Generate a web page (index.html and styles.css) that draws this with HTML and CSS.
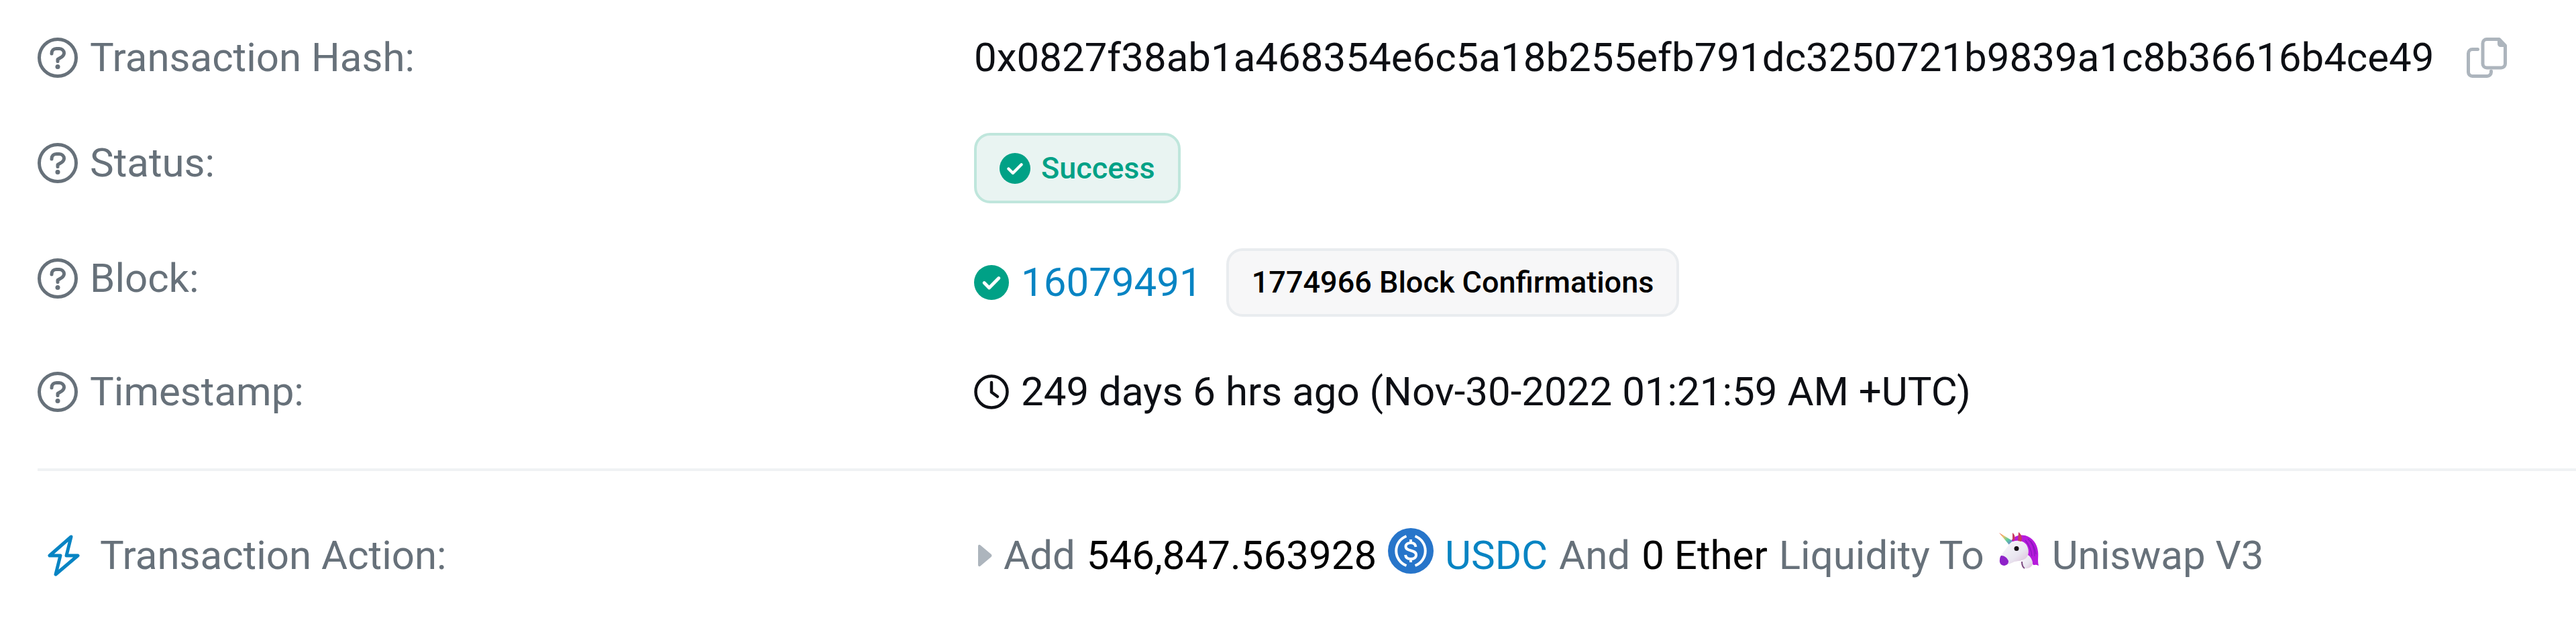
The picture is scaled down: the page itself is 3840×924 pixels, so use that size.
FILE: index.html
```html
<!DOCTYPE html>
<html lang="en">
<head>
    <meta charset="UTF-8">
    <meta name="viewport" content="width=device-width, initial-scale=1.0">
    <title>Transaction Details</title>
    <link rel="stylesheet" href="styles.css">
</head>
<body>
    <!-- shared icons -->
    <svg class="sprite" aria-hidden="true">
        <symbol id="icon-help" viewBox="0 0 60 60">
            <circle cx="30" cy="30" r="27.500" fill="none" stroke="currentColor" stroke-width="5"/>
            <path d="M21 24c0-5 3-7.500 7-7.500h4.500c4 0 7 3 7 6.500 0 3-1.500 4.500-3.500 5.800l-6 3.700v3" fill="none" stroke="currentColor" stroke-width="5" stroke-linecap="round" stroke-linejoin="round"/>
            <circle cx="30" cy="43.500" r="3.500" fill="currentColor"/>
        </symbol>
        <symbol id="icon-check" viewBox="0 0 48 48">
            <circle cx="24" cy="24" r="24" fill="#00a186"/>
            <path d="M14 24.500l6.800 6.800L34 18" fill="none" stroke="#fff" stroke-width="4.500" stroke-linecap="round" stroke-linejoin="round"/>
        </symbol>
    </svg>

    <main class="details">
        <div class="row">
            <div class="label"><svg class="help"><use href="#icon-help"/></svg>Transaction Hash:</div>
            <div class="value">
                <span>0x0827f38ab1a468354e6c5a18b255efb791dc3250721b9839a1c8b36616b4ce49</span>
                <button type="button" class="copy" aria-label="Copy transaction hash">
                    <svg viewBox="0 0 60 60" fill="none" stroke="#adb5bd" stroke-width="5" stroke-linecap="round" stroke-linejoin="round">
                        <path d="M30 2.500h18.500l9 9.500v27a6 6 0 0 1-6 6H30a6 6 0 0 1-6-6V8.500a6 6 0 0 1 6-6z"/>
                        <path d="M47.500 3v6.500a3 3 0 0 0 3 3h6.500z" fill="#adb5bd" stroke-width="3"/>
                        <path d="M16.500 17.500H8.500a6 6 0 0 0-6 6v28a6 6 0 0 0 6 6h22a6 6 0 0 0 6-6v-1.500"/>
                    </svg>
                </button>
            </div>
        </div>

        <div class="row">
            <div class="label"><svg class="help"><use href="#icon-help"/></svg>Status:</div>
            <div class="value">
                <span class="badge badge-success"><svg class="check-sm"><use href="#icon-check"/></svg>Success</span>
            </div>
        </div>

        <div class="row">
            <div class="label"><svg class="help"><use href="#icon-help"/></svg>Block:</div>
            <div class="value">
                <svg class="check"><use href="#icon-check"/></svg>
                <a href="#">16079491</a>
                <span class="badge badge-confirm">1774966 Block Confirmations</span>
            </div>
        </div>

        <div class="row">
            <div class="label"><svg class="help"><use href="#icon-help"/></svg>Timestamp:</div>
            <div class="value">
                <svg class="clock" viewBox="0 0 52 52" fill="none" stroke="#0d0f14" stroke-width="4.500" stroke-linecap="round" stroke-linejoin="round">
                    <circle cx="26" cy="26" r="23.500"/>
                    <path d="M26 12v14.500l9 6.500"/>
                </svg>
                <span>249 days 6 hrs ago (Nov-30-2022 01:21:59 AM +UTC)</span>
            </div>
        </div>

        <hr>

        <div class="row">
            <div class="label">
                <svg class="bolt" viewBox="0 0 48 62" fill="none" stroke="#0784c3" stroke-width="5" stroke-linejoin="round">
                    <path d="M35 3L3 31h16l-7 28 33-28H28z"/>
                </svg>
                Transaction Action:
            </div>
            <div class="value action">
                <svg class="caret" viewBox="0 0 22 34"><path d="M1 3c0-2 2-3 3.500-1.500l16 13.500c1.300 1.200 1.300 2.800 0 4l-16 13.500C3 34 1 33 1 31z" fill="#adb5bd"/></svg>
                <span class="muted">Add</span>
                <span class="amount">546,847.563928</span>
                <svg class="token usdc" viewBox="0 0 68 68" fill="none" stroke="#fff">
                    <circle cx="34" cy="34" r="34" fill="#2775ca" stroke="none"/>
                    <path d="M27.500 12a23.500 23.500 0 0 0 0 44M40.500 12a23.500 23.500 0 0 1 0 44" stroke-width="4"/>
                    <path d="M41.500 28c-.5-4-3.500-6-7.500-6s-7.500 2-7.500 5.500c0 8 15.500 4 15.500 12.500 0 4-3.500 6-8 6s-7.500-2-8-6M34 17v5M34 46v5" stroke-width="4"/>
                </svg>
                <a href="#">USDC</a>
                <span class="muted">And</span>
                <span class="amount">0 Ether</span>
                <span class="muted">Liquidity To</span>
                <svg class="token unicorn" viewBox="0 0 60 56">
                    <defs>
                        <linearGradient id="horn" x1="0" y1="0" x2="1" y2="1">
                            <stop offset="0" stop-color="#f0625d"/>
                            <stop offset=".3" stop-color="#efc067"/>
                            <stop offset=".6" stop-color="#5fcf9a"/>
                            <stop offset="1" stop-color="#6a6be0"/>
                        </linearGradient>
                        <linearGradient id="face" x1="0" y1="0" x2="1" y2="1">
                            <stop offset="0" stop-color="#fbfafd"/>
                            <stop offset=".6" stop-color="#e9e6f0"/>
                            <stop offset="1" stop-color="#d9b6d4"/>
                        </linearGradient>
                    </defs>
                    <path d="M18 13c3-7 13-10 21-8 11 3 18 13 19 24 1 8-1 13 1 21-4-2-6-1-8-1L40 30z" fill="#b61bdc"/>
                    <path d="M43 10c8 7 10 16 10 26M47 13c5 7 7 12 8 20M39 12c6 7 9 14 10 24" fill="none" stroke="#8a17bd" stroke-width="1.200"/>
                    <path d="M0 1l20 12-5 6z" fill="url(#horn)"/>
                    <path d="M37 34c5-1 8 0 10 4 3 5 4 8 2 12-3 4-8 5-12 4-4-3-4-8-3-12z" fill="url(#face)"/>
                    <path d="M15 18c6-7 20-7 26 1 4 7 4 15-1 20-5 4-11 4-17 5-5 2-9 5-14 4-7-1-8-7-6-12 2-6 8-11 12-18z" fill="url(#face)"/>
                    <path d="M3 35c5 0 9 3 11 8 0 4-2 6-6 7-5 0-8-4-7-9 0-3 1-5 2-6z" fill="#8e22c8"/>
                    <path d="M20 1c4 3 4 7 3 11l-3 1zM29 0c5 4 6 9 4 14l-5-1z" fill="#c93a62"/>
                    <circle cx="26" cy="24.500" r="3.500" fill="#171016"/>
                    <path d="M34 44c0 5 1 8 4 10" fill="none" stroke="#7c4a80" stroke-width="2"/>
                </svg>
                <span class="muted">Uniswap V3</span>
            </div>
        </div>
    </main>
</body>
</html>
```
FILE: styles.css
```css
body {
    margin: 0;
    background: #fff;
    color: #0d0f14;
    font-family: Roboto, "Liberation Sans", sans-serif;
    font-size: 60px;
    line-height: 90px;
}
.sprite { display: none; }
svg { display: block; flex: none; }
a { color: #0784c3; text-decoration: none; }
a:hover { color: #066a9c; }

.details {
    display: flex;
    flex-direction: column;
    gap: 67px;
    padding: 41px 0 40px 56px;
}
.row {
    display: grid;
    grid-template-columns: 349fr 597fr;
    align-items: start;
}
.label {
    display: flex;
    align-items: center;
    color: #67717a;
}
.value {
    display: flex;
    align-items: center;
    white-space: nowrap;
}
.help { width: 60px; height: 60px; margin-right: 18px; }
hr {
    width: 100%;
    height: 4px;
    margin: 2px 0 14px;
    border: 0;
    background: #eff2f4;
}

.copy {
    margin-left: 48px;
    padding: 0;
    border: 0;
    background: none;
    cursor: pointer;
}
.copy svg { width: 60px; height: 60px; }

.badge {
    display: flex;
    align-items: center;
    box-sizing: border-box;
    border: 4px solid;
    border-radius: 24px;
    padding: 0 34px;
    font-size: 45px;
    font-weight: 500;
}
.badge-success {
    height: 105px;
    border-color: #bfe6dc;
    background: #e9f4f2;
    color: #00a186;
}
.badge-confirm {
    height: 102px;
    margin-left: 36px;
    border-color: #e9ecef;
    background: #f7f7f8;
    color: #000;
}
.check-sm { width: 46px; height: 46px; margin-right: 16px; }
.check { width: 52px; height: 52px; margin-right: 18px; }
.clock { width: 52px; height: 52px; margin-right: 18px; }

.bolt { width: 48px; height: 62px; margin: 0 30px 0 15px; }
.muted { color: #67717a; }
.amount { color: #000; }
.action { gap: 17px; }
.caret { width: 22px; height: 34px; margin-left: 5px; }
/* token logos sit a little above the text middle */
.token { margin-bottom: 14px; }
.usdc { width: 68px; height: 68px; }
.unicorn { width: 60px; height: 56px; margin-left: 5px; margin-right: 2px; }
```
